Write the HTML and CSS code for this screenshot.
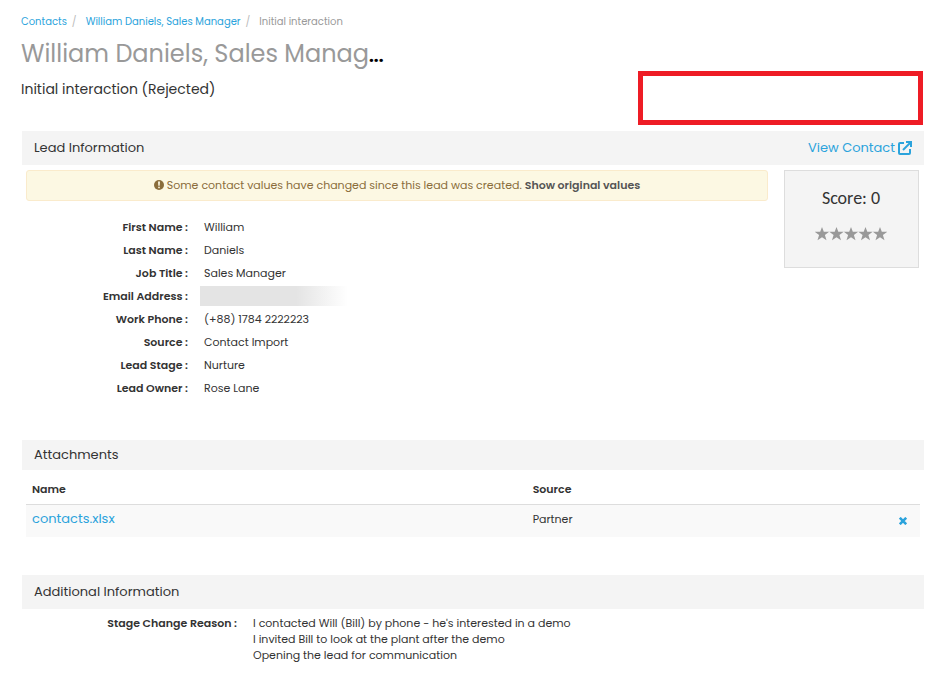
FILE: index.html
```html
<!DOCTYPE html>
<html lang="en">
<head>
    <meta charset="UTF-8">
    <meta name="viewport" content="width=device-width, initial-scale=1.0">
    <title>Initial interaction</title>
    <link rel="stylesheet" href="styles.css">
</head>
<body>
    <div class="page">
        <nav>
            <ol class="breadcrumb">
                <li><a href="#">Contacts</a></li>
                <li><a href="#">William Daniels, Sales Manager</a></li>
                <li>Initial interaction</li>
            </ol>
        </nav>

        <header class="lead-header">
            <div class="lead-heading">
                <h1>William Daniels, Sales Manag<span class="more">...</span></h1>
                <h2>Initial interaction (Rejected)</h2>
            </div>
            <div class="actions"></div>
        </header>

        <!-- Lead information -->
        <section class="panel lead-info">
            <div class="panel-title tall">
                <h3>Lead Information</h3>
                <a href="#" class="view-contact">View Contact
                    <svg width="14" height="14" viewBox="0 0 14 14" fill="none" stroke="currentColor" stroke-width="2">
                        <path d="M6 2H2Q1 2 1 3V12Q1 13 2 13H11Q12 13 12 12V8"/>
                        <path d="M5 9L12 2"/>
                        <path d="M8 1H13V6"/>
                    </svg>
                </a>
            </div>
            <div class="panel-body info-body">
                <div class="info-main">
                    <div class="alert">
                        <svg width="10" height="10" viewBox="0 0 10 10">
                            <circle cx="5" cy="5" r="5" fill="currentColor"/>
                            <path d="M4 1.5H6L5.7 5.8H4.3Z" fill="#fcf8e3"/>
                            <rect x="4.2" y="6.7" width="1.6" height="1.5" fill="#fcf8e3"/>
                        </svg>
                        Some contact values have changed since this lead was created.
                        <a href="#">Show original values</a>
                    </div>
                    <dl class="fields">
                        <dt>First Name :</dt><dd>William</dd>
                        <dt>Last Name :</dt><dd>Daniels</dd>
                        <dt>Job Title :</dt><dd>Sales Manager</dd>
                        <dt>Email Address :</dt><dd><div class="masked"></div></dd>
                        <dt>Work Phone :</dt><dd>(+88) 1784 2222223</dd>
                        <dt>Source :</dt><dd>Contact Import</dd>
                        <dt>Lead Stage :</dt><dd>Nurture</dd>
                        <dt>Lead Owner :</dt><dd>Rose Lane</dd>
                    </dl>
                </div>
                <aside class="score">
                    <div class="score-value">Score: 0</div>
                    <svg class="stars" width="72" height="14" viewBox="0 0 72 14" fill="currentColor">
                        <defs>
                            <path id="star" d="M7 0L8.8 4.8H14.2L9.9 8.1L11.5 13.3L7 10.2L2.5 13.3L4.1 8.1L-0.2 4.8H5.2Z"/>
                        </defs>
                        <use href="#star" x="0"/>
                        <use href="#star" x="14.5"/>
                        <use href="#star" x="29"/>
                        <use href="#star" x="43.5"/>
                        <use href="#star" x="58"/>
                    </svg>
                </aside>
            </div>
        </section>

        <!-- Attachments -->
        <section class="panel attachments">
            <div class="panel-title">
                <h3>Attachments</h3>
            </div>
            <div class="panel-body">
                <table>
                    <thead>
                        <tr><th class="col-name">Name</th><th>Source</th><th></th></tr>
                    </thead>
                    <tbody>
                        <tr>
                            <td><a href="#" class="file">contacts.xlsx</a></td>
                            <td>Partner</td>
                            <td class="col-remove">
                                <button type="button" class="remove" aria-label="Remove">
                                    <svg width="8" height="8" viewBox="0 0 8 8" stroke="currentColor" stroke-width="2.6">
                                        <path d="M0.8 0.8L7.2 7.2M7.2 0.8L0.8 7.2"/>
                                    </svg>
                                </button>
                            </td>
                        </tr>
                    </tbody>
                </table>
            </div>
        </section>

        <!-- Additional information -->
        <section class="panel">
            <div class="panel-title tall">
                <h3>Additional Information</h3>
            </div>
            <dl class="panel-body reason">
                <dt>Stage Change Reason :</dt>
                <dd>I contacted Will (Bill) by phone - he's interested in a demo<br>I invited Bill to look at the plant after the demo<br>Opening the lead for communication</dd>
            </dl>
        </section>
    </div>
</body>
</html>
```
FILE: styles.css
```css
:root {
    --link-color: #2ba3dc;
    --text-color: #333;
    --muted: #999;
    --bar-color: #f4f4f4;
}

* {
    box-sizing: border-box;
}

body {
    margin: 0;
    font-family: Poppins, Inter, "Liberation Sans", sans-serif;
    font-size: 11px;
    line-height: 16px;
    color: var(--text-color);
    background-color: #fff;
}

h1, h2, h3, dl, dd, ol {
    margin: 0;
    padding: 0;
    font-weight: normal;
}

a {
    color: var(--link-color);
    text-decoration: none;
}

svg {
    display: block;
}

.page {
    padding: 14px 23px 16px 21px;
}

.breadcrumb {
    display: flex;
    list-style: none;
    font-size: 10px;
    color: var(--muted);
}

.breadcrumb li + li::before {
    content: "/";
    padding: 0 9px 0 5px;
    color: #bbb;
}

.lead-header {
    display: flex;
    justify-content: space-between;
    align-items: flex-end;
    margin-bottom: 6px;
    padding-right: 1px;
}

.lead-heading {
    height: 95px;
    padding-top: 7px;
}

h1 {
    font-size: 24px;
    line-height: 34px;
    color: var(--muted);
}

h1 .more {
    font-weight: bold;
    font-size: 17px;
    color: #000;
}

h2 {
    margin-top: 6px;
    font-size: 14px;
    line-height: 20px;
}

.actions {
    width: 285px;
    height: 54px;
    border: 5px solid #ee1c25;
}

.panel {
    margin-left: 1px;
}

.panel-title {
    display: flex;
    justify-content: space-between;
    align-items: center;
    height: 30px;
    padding: 0 12px;
    background-color: var(--bar-color);
}

.panel-title.tall {
    height: 34px;
}

h3 {
    font-size: 13px;
}

.view-contact {
    display: flex;
    align-items: center;
    gap: 3px;
    font-size: 13px;
}

.panel-body {
    padding: 5px 4px 0;
}

.lead-info {
    margin-bottom: 41px;
}

.info-body {
    display: flex;
    align-items: flex-start;
    gap: 16px;
    padding-right: 5px;
}

.info-main {
    flex: 1;
}

.alert {
    display: flex;
    justify-content: center;
    align-items: center;
    gap: 3px;
    height: 31px;
    padding-bottom: 2px;
    border: 1px solid #faebcc;
    border-radius: 3px;
    background-color: #fcf8e3;
    color: #8a6d3b;
}

.alert a {
    font-weight: 600;
    color: #555;
}

.fields {
    display: grid;
    grid-template-columns: 162px 1fr;
    column-gap: 16px;
    grid-auto-rows: 23px;
    align-items: center;
    margin-top: 14px;
}

dt {
    font-weight: 600;
    text-align: right;
}

.masked {
    width: 148px;
    height: 20px;
    margin-left: -4px;
    background: linear-gradient(to right, #e4e4e4 0%, #e4e4e4 65%, #fff 100%);
}

.score {
    display: flex;
    flex-direction: column;
    align-items: center;
    width: 135px;
    height: 98px;
    padding: 15px 1px 0 0;
    border: 1px solid #ddd;
    background-color: var(--bar-color);
}

.score-value {
    font-family: Carlito, Lato, sans-serif;
    font-size: 18px;
    line-height: 24px;
}

.stars {
    margin-top: 17px;
    color: var(--muted);
}

.attachments {
    margin-bottom: 38px;
}

table {
    width: 100%;
    border-collapse: collapse;
}

th, td {
    padding: 6px;
    text-align: left;
    font-weight: normal;
}

th {
    height: 29px;
    font-weight: 600;
    border-bottom: 1px solid #ddd;
}

td {
    height: 33px;
    padding: 6px 6px 10px;
    background-color: #f9f9f9;
}

.col-name {
    width: 56%;
}

.file {
    font-size: 13px;
}

.col-remove {
    padding: 8px 13px 7px;
}

.remove {
    display: block;
    margin-left: auto;
    padding: 0;
    border: none;
    background: none;
    color: var(--link-color);
    cursor: pointer;
}

.reason {
    display: grid;
    grid-template-columns: 211px 1fr;
    column-gap: 16px;
    padding-top: 6px;
}
```
